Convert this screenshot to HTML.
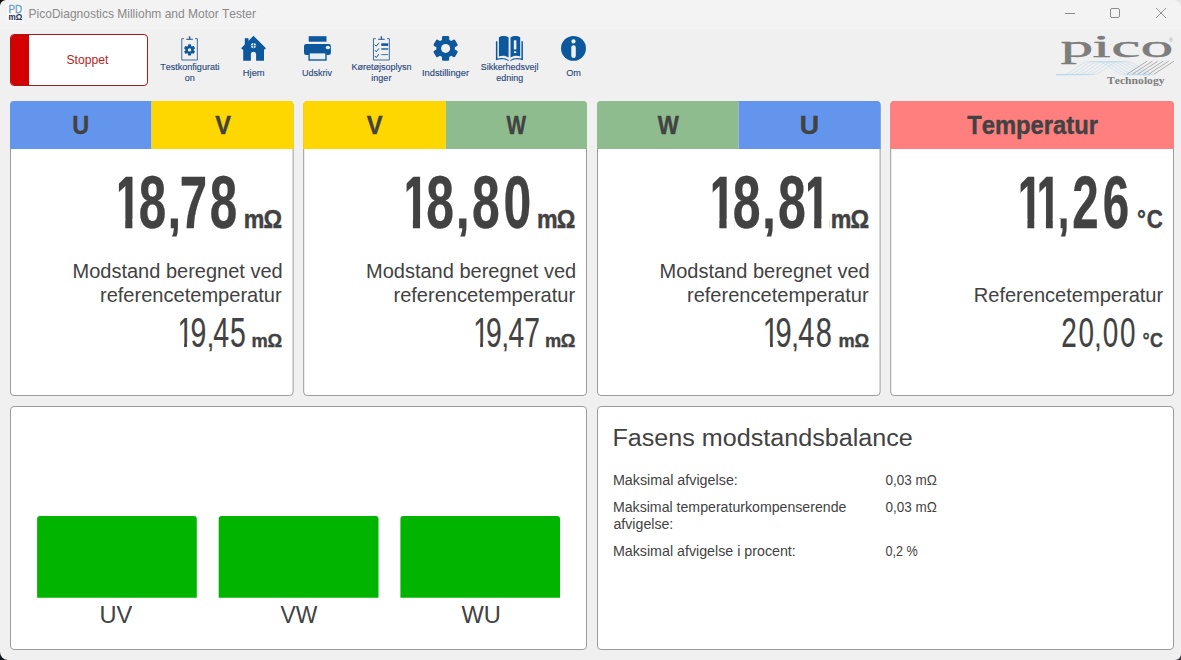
<!DOCTYPE html>
<html lang="da">
<head>
<meta charset="utf-8">
<title>PicoDiagnostics Milliohm and Motor Tester</title>
<style>
*{box-sizing:border-box;margin:0;padding:0}
html,body{width:1181px;height:660px;overflow:hidden;background:#f0f0f0}
body{position:relative;font-family:"Liberation Sans",sans-serif;color:#424242}
.abs{position:absolute;left:0;top:0}
svg text{font-kerning:none;white-space:pre}
#titlebar{position:absolute;left:0;top:0;width:1181px;height:29px;background:#f3f3f3}
#stop{position:absolute;left:10px;top:34px;width:138px;height:52px;background:#fff;border:1px solid #a31a1a;border-radius:4px;overflow:hidden}
#stop i{position:absolute;left:0;top:0;width:17.6px;height:50px;background:#d20000}
</style>
</head>
<body>
<div id="titlebar"></div>
<div id="stop"><i></i></div>

<svg id="cards" class="abs" width="1181" height="660" viewBox="0 0 1181 660">
<rect x="10.50" y="101.5" width="282.60" height="294" rx="3.5" fill="#fff" stroke="#9c9c9c"/>
<path d="M10.00 149V105a4 4 0 0 1 4 -4H151.50V149Z" fill="#6495ed"/>
<path d="M151.50 149V101H289.60a4 4 0 0 1 4 4V149Z" fill="#ffd700"/>
<rect x="303.70" y="101.5" width="282.80" height="294" rx="3.5" fill="#fff" stroke="#9c9c9c"/>
<path d="M303.20 149V105a4 4 0 0 1 4 -4H445.80V149Z" fill="#ffd700"/>
<path d="M445.80 149V101H583.00a4 4 0 0 1 4 4V149Z" fill="#8fbc8f"/>
<rect x="597.50" y="101.5" width="282.60" height="294" rx="3.5" fill="#fff" stroke="#9c9c9c"/>
<path d="M597.00 149V105a4 4 0 0 1 4 -4H738.60V149Z" fill="#8fbc8f"/>
<path d="M738.60 149V101H876.60a4 4 0 0 1 4 4V149Z" fill="#6495ed"/>
<rect x="890.70" y="101.5" width="282.80" height="294" rx="3.5" fill="#fff" stroke="#9c9c9c"/>
<path d="M890.20 149V105a4 4 0 0 1 4 -4H1170.00a4 4 0 0 1 4 4V149Z" fill="#ff7f7f"/>
<rect x="10.50" y="406.5" width="576.00" height="243" rx="3.5" fill="#fff" stroke="#9c9c9c"/>
<rect x="597.50" y="406.5" width="576.00" height="243" rx="3.5" fill="#fff" stroke="#9c9c9c"/>
<path d="M37.10 597.8V519a3 3 0 0 1 3 -3H193.80a3 3 0 0 1 3 3V597.8Z" fill="#00b400"/>
<path d="M218.70 597.8V519a3 3 0 0 1 3 -3H375.50a3 3 0 0 1 3 3V597.8Z" fill="#00b400"/>
<path d="M400.40 597.8V519a3 3 0 0 1 3 -3H557.00a3 3 0 0 1 3 3V597.8Z" fill="#00b400"/>
</svg>
<svg id="icons" class="abs" style="left:0;top:0" width="1181" height="660" viewBox="0 0 1181 660">
<path d="M0 0H6A6 6 0 0 0 0 6Z" fill="#0c0c0c"/>
<path d="M1181 0h-8a8 8 0 0 1 8 8Z" fill="#e4e4e4"/>
<path d="M0 660h8a8 8 0 0 1 -8 -8Z" fill="#0c1418"/>
<path d="M1181 660h-6a6 6 0 0 0 6 -6Z" fill="#3a3a40"/>
<rect x="7.5" y="4" width="16" height="17.5" rx="1.5" fill="#fafcfe"/>
<text x="8.6" y="12.7" font-family="'Liberation Sans',sans-serif" font-size="10.8" fill="#6a9cc8" stroke="#6a9cc8" stroke-width="0.35" textLength="13.6" lengthAdjust="spacingAndGlyphs">PD</text>
<text x="8.6" y="19.9" font-family="'Liberation Sans',sans-serif" font-weight="bold" font-size="8.6" fill="#1c2a4a" textLength="13.8" lengthAdjust="spacingAndGlyphs">mΩ</text>
<g stroke="#8a8a8a" stroke-width="1" fill="none"><path d="M1065 13.5h10"/><rect x="1110.5" y="8.5" width="9" height="9" rx="1.6"/><path d="M1156 8l10 10M1166 8l-10 10" stroke-width="0.9"/></g>
<g fill="none" stroke="#2f5d8c" stroke-width="0.9" stroke-linejoin="miter"><path d="M183.95 38.65H181.75V60.0H197.35V38.65H195.15"/><path d="M186.25 39.3H192.85" stroke-width="1.1"/><path d="M189.55 36.3V39.2" stroke-width="1.5"/></g>
<g fill="#0d589d"><circle cx="189.55" cy="49.9" r="4.2"/><rect x="188.05" y="44.30" width="3.0" height="11.20" rx="0.54" transform="rotate(0 189.55 49.9)"/><rect x="188.05" y="44.30" width="3.0" height="11.20" rx="0.54" transform="rotate(60 189.55 49.9)"/><rect x="188.05" y="44.30" width="3.0" height="11.20" rx="0.54" transform="rotate(120 189.55 49.9)"/><circle cx="189.55" cy="49.9" r="1.7" fill="#f0f0f0"/></g>
<g fill="#0d589d"><path d="M253.5 35.8L266 48.3L264.6 49.4H264V60.8H243.2V49.4H242.4L241.1 48.3Z"/><rect x="244.8" y="38.2" width="3.7" height="8"/><path d="M250.9 60.9V54.4a2.6 2.6 0 0 1 5.2 0V60.9Z" fill="#f0f0f0"/><circle cx="253.5" cy="45.6" r="2.6" fill="#dfe8f2"/><path d="M253.5 43V48.2M250.9 45.6H256.1" stroke="#0d589d" stroke-width="0.7" fill="none"/></g>
<g fill="#0d589d"><rect x="308.7" y="36.2" width="17.8" height="5.5"/><rect x="304" y="44" width="26.9" height="11" rx="2.2"/><rect x="308.4" y="52.4" width="18.3" height="8.3"/><rect x="309.8" y="53.4" width="15.5" height="5.9" fill="#e9eff6"/><ellipse cx="327.9" cy="47.5" rx="2.2" ry="1.8" fill="#e9eff6"/></g>
<g fill="none" stroke="#2f5d8c" stroke-width="0.9" stroke-linejoin="miter"><path d="M375.80 38.65H373.45V60.0H389.35V38.65H387.00"/><path d="M378.10 39.3H384.70" stroke-width="1.1"/><path d="M381.40 36.3V39.2" stroke-width="1.5"/></g>
<g fill="none" stroke="#0d589d"><path d="M374.9 44.6l1.4 1.6l2.6-3.4M374.9 50.2l1.4 1.6l2.6-3.4M374.9 55.9l1.4 1.6l2.6-3.4" stroke-width="1"/><path d="M381.3 44.6h6.9" stroke-width="2.6"/><path d="M381.3 49h6.9" stroke-width="1.4"/><path d="M381.3 54.6h6.9" stroke-width="0.8"/></g>
<g fill="#0d589d"><circle cx="445.6" cy="48.4" r="9.3"/><rect x="442.00" y="36.00" width="7.2" height="24.80" rx="1.30" transform="rotate(0 445.6 48.4)"/><rect x="442.00" y="36.00" width="7.2" height="24.80" rx="1.30" transform="rotate(60 445.6 48.4)"/><rect x="442.00" y="36.00" width="7.2" height="24.80" rx="1.30" transform="rotate(120 445.6 48.4)"/><circle cx="445.6" cy="48.4" r="4.5" fill="#f0f0f0"/></g>
<g fill="#0d589d"><path d="M498.9 37.2C501.5 35.5 505.5 35.3 508.6 37.4V57.6C505.5 55.4 501.5 55.3 498.9 56.6Z"/><path d="M520.2 37.2C517.6 35.5 513.6 35.3 510.5 37.4V57.6C513.6 55.4 517.6 55.3 520.2 56.6Z"/><path d="M495.9 41.3h1.5V58.6C501.5 57.3 505.6 57.8 508.7 60.2V61.2C505.5 59.2 501.2 58.8 495.9 60.2Z"/><path d="M522.9 41.3h-1.5V58.6C517.4 57.3 513.4 57.8 510.3 60.2V61.2C513.5 59.2 517.7 58.8 522.9 60.2Z"/><rect x="513.8" y="40.2" width="2.6" height="9.4" rx="0.5" fill="#e9eff6"/><rect x="513.9" y="51.2" width="2.4" height="1.8" rx="0.5" fill="#e9eff6"/></g>
<circle cx="573.5" cy="48.4" r="12.45" fill="#0d589d"/><circle cx="573.5" cy="41.4" r="2.1" fill="#eef2f7"/><rect x="571.3" y="45.3" width="4.5" height="12.7" rx="2.2" fill="#eef2f7"/>
<text x="1169.2" y="41.6" font-family="'Liberation Sans',sans-serif" font-size="4.5" fill="#9a9a9a">®</text>
<text x="1107" y="83.6" font-family="'Liberation Serif',serif" font-weight="bold" font-size="9.7" fill="#7d7d7d" textLength="57.6" lengthAdjust="spacingAndGlyphs">Technology</text>
<g fill="none" stroke-width="0.55" stroke-linejoin="round"><path stroke="#b9d9ee" d="M1056 74.6H1064.0C1070.0 74.6 1082.0 61.6 1088.0 61.6H1098.0C1104.0 61.6 1118.0 74.6 1124.0 74.6H1150"/><path stroke="#b9d9ee" d="M1056 74.6H1069.0C1075.0 74.6 1087.0 61.6 1093.0 61.6H1103.0C1109.0 61.6 1123.0 74.6 1129.0 74.6H1150"/><path stroke="#b9d9ee" d="M1056 74.6H1074.0C1080.0 74.6 1092.0 61.6 1098.0 61.6H1108.0C1114.0 61.6 1128.0 74.6 1134.0 74.6H1150"/><path stroke="#b9d9ee" d="M1056 74.6H1079.0C1085.0 74.6 1097.0 61.6 1103.0 61.6H1113.0C1119.0 61.6 1133.0 74.6 1139.0 74.6H1150"/><path stroke="#b9d9ee" d="M1056 74.6H1084.0C1090.0 74.6 1102.0 61.6 1108.0 61.6H1118.0C1124.0 61.6 1138.0 74.6 1144.0 74.6H1150"/><path stroke="#b9d9ee" d="M1056 74.6H1089.0C1095.0 74.6 1107.0 61.6 1113.0 61.6H1123.0C1129.0 61.6 1143.0 74.6 1149.0 74.6H1150"/><path stroke="#b9d9ee" d="M1056 74.6H1094.0C1100.0 74.6 1112.0 61.6 1118.0 61.6H1128.0C1134.0 61.6 1148.0 74.6 1154.0 74.6H1150"/><path stroke="#73787d" d="M1127.0 74.2L1147.0 61.2"/><path stroke="#73787d" d="M1132.4 74.2L1152.4 61.2"/><path stroke="#73787d" d="M1137.8 74.2L1157.8 61.2"/><path stroke="#73787d" d="M1143.2 74.2L1163.2 61.2"/><path stroke="#73787d" d="M1148.6 74.2L1168.6 61.2"/><path stroke="#73787d" d="M1154.0 74.2L1174.0 61.2"/></g>
</svg>
<svg id="txt" class="abs" width="1181" height="660" viewBox="0 0 1181 660" font-family="'Liberation Sans',sans-serif" fill="#424242">
<clipPath id="k0"><path clip-rule="evenodd" d="M0 0H1181V660H0ZM116.29 174.70H118.90V202.25H116.29ZM166.42 215.74H182.13V218.40H166.42ZM116.02 218.92H125.28V229.30H116.02ZM132.35 218.92H140.58V229.30H132.35ZM166.42 236.40H182.13V240.30H166.42Z"/></clipPath>
<clipPath id="k1"><path clip-rule="evenodd" d="M0 0H1181V660H0ZM403.84 174.70H406.60V202.25H403.84ZM454.85 215.74H470.70V218.40H454.85ZM403.57 218.92H412.91V229.30H403.57ZM420.05 218.92H428.36V229.30H420.05ZM454.85 236.40H470.70V240.30H454.85Z"/></clipPath>
<clipPath id="k2"><path clip-rule="evenodd" d="M0 0H1181V660H0ZM710.28 174.70H712.70V202.25H710.28ZM805.08 174.70H808.00V202.25H805.08ZM760.92 215.74H776.83V218.40H760.92ZM710.01 218.92H719.38V229.30H710.01ZM726.55 218.92H734.89V229.30H726.55ZM804.81 218.92H814.18V229.30H804.81ZM821.35 218.92H829.69V229.30H821.35ZM760.92 236.40H776.83V240.30H760.92Z"/></clipPath>
<clipPath id="k3"><path clip-rule="evenodd" d="M0 0H1181V660H0ZM1018.75 174.70H1020.60V202.25H1018.75ZM1037.25 174.70H1039.40V202.25H1037.25ZM1055.38 215.74H1070.57V218.40H1055.38ZM1018.50 218.92H1027.44V229.30H1018.50ZM1034.25 218.92H1045.94V229.30H1034.25ZM1052.75 218.92H1060.69V229.30H1052.75ZM1055.38 236.40H1070.57V240.30H1055.38Z"/></clipPath>
<clipPath id="k4"><path clip-rule="evenodd" d="M0 0H1181V660H0ZM178.88 315.80H180.20V332.30H178.88ZM205.45 341.29H215.35V343.50H205.45ZM178.31 342.53H184.14V348.30H178.31ZM186.95 342.53H192.16V348.30H186.95ZM205.45 351.20H215.35V353.19H205.45Z"/></clipPath>
<clipPath id="k5"><path clip-rule="evenodd" d="M0 0H1181V660H0ZM500.22 341.29H510.08V343.50H500.22ZM474.34 342.53H480.15V348.30H474.34ZM482.95 342.53H488.14V348.30H482.95ZM500.22 351.20H510.08V353.19H500.22Z"/></clipPath>
<clipPath id="k6"><path clip-rule="evenodd" d="M0 0H1181V660H0ZM790.07 341.29H800.13V343.50H790.07ZM764.05 342.53H769.99V348.30H764.05ZM772.85 342.53H778.16V348.30H772.85ZM790.07 351.20H800.13V353.19H790.07Z"/></clipPath>
<clipPath id="k7"><path clip-rule="evenodd" d="M0 0H1181V660H0ZM1092.87 341.29H1102.63V343.50H1092.87ZM1092.87 351.20H1102.63V353.19H1092.87Z"/></clipPath>
<g clip-path="url(#k0)"><text transform="matrix(0.4934 0 0 0.7427 0 227.80)" x="230.88 281.32 339.32 364.11 425.02" font-size="100" font-weight="bold" stroke="#424242" stroke-width="0.49" stroke-linejoin="round">18,78</text></g>
<g clip-path="url(#k1)"><text transform="matrix(0.4982 0 0 0.7427 0 227.80)" x="805.77 855.82 915.00 947.45 1010.60" font-size="100" font-weight="bold" stroke="#424242" stroke-width="0.48" stroke-linejoin="round">18,80</text></g>
<g clip-path="url(#k2)"><text transform="matrix(0.5004 0 0 0.7427 0 227.80)" x="1414.72 1464.39 1522.78 1554.73 1604.18" font-size="100" font-weight="bold" stroke="#424242" stroke-width="0.48" stroke-linejoin="round">18,81</text></g>
<g clip-path="url(#k3)"><text transform="matrix(0.4747 0 0 0.7427 0 227.80)" x="2141.37 2180.35 2225.38 2258.65 2323.03" font-size="100" font-weight="bold" stroke="#424242" stroke-width="0.49" stroke-linejoin="round">11,26</text></g>
<g clip-path="url(#k4)"><text transform="matrix(0.2842 0 0 0.4215 0 346.80)" x="623.30 670.49 726.43 750.31 809.73" font-size="100" stroke="#424242" stroke-width="0.34" stroke-linejoin="round">19,45</text></g>
<g clip-path="url(#k5)"><text transform="matrix(0.2830 0 0 0.4215 0 346.80)" x="1672.17 1717.06 1771.24 1796.69 1852.51" font-size="100" stroke="#424242" stroke-width="0.34" stroke-linejoin="round">19,47</text></g>
<g clip-path="url(#k6)"><text transform="matrix(0.2902 0 0 0.4215 0 346.80)" x="2628.42 2672.35 2725.69 2750.68 2810.66" font-size="100" stroke="#424242" stroke-width="0.34" stroke-linejoin="round">19,48</text></g>
<g clip-path="url(#k7)"><text transform="matrix(0.2790 0 0 0.4215 0 346.80)" x="3803.87 3865.35 3921.21 3952.64 4014.65" font-size="100" stroke="#424242" stroke-width="0.34" stroke-linejoin="round">20,00</text></g>
<text transform="matrix(0.2320 0 0 0.2536 0 227.90)" x="1050.30 1135.51" font-size="100" font-weight="bold" stroke="#424242" stroke-width="1.85" stroke-linejoin="round">mΩ</text>
<text transform="matrix(0.1830 0 0 0.1905 0 346.80)" x="1374.28 1461.58" font-size="100" font-weight="bold" stroke="#424242" stroke-width="1.87" stroke-linejoin="round">mΩ</text>
<text transform="matrix(0.2320 0 0 0.2536 0 227.90)" x="2314.96 2400.17" font-size="100" font-weight="bold" stroke="#424242" stroke-width="1.85" stroke-linejoin="round">mΩ</text>
<text transform="matrix(0.1830 0 0 0.1905 0 346.80)" x="2977.56 3064.86" font-size="100" font-weight="bold" stroke="#424242" stroke-width="1.87" stroke-linejoin="round">mΩ</text>
<text transform="matrix(0.2320 0 0 0.2536 0 227.90)" x="3580.48 3665.69" font-size="100" font-weight="bold" stroke="#424242" stroke-width="1.85" stroke-linejoin="round">mΩ</text>
<text transform="matrix(0.1830 0 0 0.1905 0 346.80)" x="4581.93 4669.23" font-size="100" font-weight="bold" stroke="#424242" stroke-width="1.87" stroke-linejoin="round">mΩ</text>
<text transform="matrix(0.2220 0 0 0.2521 0 227.90)" x="5121.33 5165.25" font-size="100" font-weight="bold" stroke="#424242" stroke-width="1.69" stroke-linejoin="round">°C</text>
<text transform="matrix(0.1790 0 0 0.1963 0 346.80)" x="6382.06 6424.79" font-size="100" font-weight="bold" stroke="#424242" stroke-width="1.60" stroke-linejoin="round">°C</text>
<text transform="matrix(0.6564 0 0 0.3116 0 56.50)" x="1615.55 1664.34 1692.87 1737.35" font-size="100" fill="#7d7d7d" font-family="'Liberation Serif',serif" stroke="#7d7d7d" stroke-width="1.24" stroke-linejoin="round">pico</text>
<text transform="matrix(0.9843 0 0 1.0000 28.61 17.80)" font-size="12.2" fill="#8a8a8a">PicoDiagnostics Milliohm and Motor Tester</text>
<text transform="matrix(0.9973 0 0 1.0000 66.45 63.80)" font-size="12.2" fill="#b71c1c">Stoppet</text>
<text transform="matrix(0.9150 0 0 1.0000 160.20 69.80)" font-size="9.9" fill="#2a4a7c" stroke="#2a4a7c" stroke-width="0.15">Testkonfigurati</text>
<text transform="matrix(0.9150 0 0 1.0000 184.67 80.70)" font-size="9.9" fill="#2a4a7c" stroke="#2a4a7c" stroke-width="0.15">on</text>
<text transform="matrix(0.9428 0 0 1.0000 242.83 75.80)" font-size="9.9" fill="#2a4a7c" stroke="#2a4a7c" stroke-width="0.15">Hjem</text>
<text transform="matrix(0.9098 0 0 1.0000 302.11 75.80)" font-size="9.9" fill="#2a4a7c" stroke="#2a4a7c" stroke-width="0.15">Udskriv</text>
<text transform="matrix(0.9123 0 0 1.0000 351.46 69.80)" font-size="9.9" fill="#2a4a7c" stroke="#2a4a7c" stroke-width="0.15">Køretøjsoplysn</text>
<text transform="matrix(0.9123 0 0 1.0000 371.33 80.70)" font-size="9.9" fill="#2a4a7c" stroke="#2a4a7c" stroke-width="0.15">inger</text>
<text transform="matrix(0.9409 0 0 1.0000 421.94 75.80)" font-size="9.9" fill="#2a4a7c" stroke="#2a4a7c" stroke-width="0.15">Indstillinger</text>
<text transform="matrix(0.9073 0 0 1.0000 480.69 69.80)" font-size="9.9" fill="#2a4a7c" stroke="#2a4a7c" stroke-width="0.15">Sikkerhedsvejl</text>
<text transform="matrix(0.9073 0 0 1.0000 496.21 80.70)" font-size="9.9" fill="#2a4a7c" stroke="#2a4a7c" stroke-width="0.15">edning</text>
<text transform="matrix(0.9241 0 0 1.0000 566.27 75.80)" font-size="9.9" fill="#2a4a7c" stroke="#2a4a7c" stroke-width="0.15">Om</text>
<text transform="matrix(0.9163 0 0 1.0000 72.29 133.70)" font-size="25.6" font-weight="bold" stroke="#424242" stroke-width="0.4">U</text>
<text transform="matrix(0.9208 0 0 1.0000 215.14 133.70)" font-size="25.6" font-weight="bold" stroke="#424242" stroke-width="0.4">V</text>
<text transform="matrix(0.9268 0 0 1.0000 366.64 133.70)" font-size="25.6" font-weight="bold" stroke="#424242" stroke-width="0.4">V</text>
<text transform="matrix(0.8087 0 0 1.0000 506.58 133.70)" font-size="25.6" font-weight="bold" stroke="#424242" stroke-width="0.4">W</text>
<text transform="matrix(0.8751 0 0 1.0000 657.78 133.70)" font-size="25.6" font-weight="bold" stroke="#424242" stroke-width="0.4">W</text>
<text transform="matrix(1.0463 0 0 1.0000 799.79 133.70)" font-size="25.6" font-weight="bold" stroke="#424242" stroke-width="0.4">U</text>
<text transform="matrix(0.9289 0 0 1.0000 967.23 133.70)" font-size="25.6" font-weight="bold" stroke="#424242" stroke-width="0.4">Temperatur</text>
<text transform="matrix(1.0009 0 0 1.0000 72.46 277.90)" font-size="20.0">Modstand beregnet ved</text>
<text transform="matrix(1.0037 0 0 1.0000 99.97 301.80)" font-size="20.0">referencetemperatur</text>
<text transform="matrix(1.0009 0 0 1.0000 365.96 277.90)" font-size="20.0">Modstand beregnet ved</text>
<text transform="matrix(1.0037 0 0 1.0000 393.47 301.80)" font-size="20.0">referencetemperatur</text>
<text transform="matrix(1.0009 0 0 1.0000 659.46 277.90)" font-size="20.0">Modstand beregnet ved</text>
<text transform="matrix(1.0037 0 0 1.0000 686.97 301.80)" font-size="20.0">referencetemperatur</text>
<text transform="matrix(1.0031 0 0 1.0000 973.75 301.80)" font-size="20.0">Referencetemperatur</text>
<text transform="matrix(1.0346 0 0 1.0000 612.44 445.60)" font-size="24.3">Fasens modstandsbalance</text>
<text transform="matrix(1.0025 0 0 1.0000 612.92 484.80)" font-size="14.3">Maksimal afvigelse:</text>
<text transform="matrix(0.9891 0 0 1.0000 612.94 512.20)" font-size="14.3">Maksimal temperaturkompenserende</text>
<text transform="matrix(0.9898 0 0 1.0000 613.50 529.00)" font-size="14.3">afvigelse:</text>
<text transform="matrix(0.9966 0 0 1.0000 612.93 555.80)" font-size="14.3">Maksimal afvigelse i procent:</text>
<text transform="matrix(0.9449 0 0 1.0000 885.47 484.80)" font-size="14.3">0,03 mΩ</text>
<text transform="matrix(0.9449 0 0 1.0000 885.47 512.20)" font-size="14.3">0,03 mΩ</text>
<text transform="matrix(0.8845 0 0 1.0000 885.51 555.80)" font-size="14.3">0,2 %</text>
<text transform="matrix(0.9685 0 0 1.0000 99.38 622.60)" font-size="24.4">UV</text>
<text transform="matrix(0.9383 0 0 1.0000 280.60 622.60)" font-size="24.4">VW</text>
<text transform="matrix(0.9700 0 0 1.0000 461.40 622.60)" font-size="24.4">WU</text>
</svg>
</body>
</html>
